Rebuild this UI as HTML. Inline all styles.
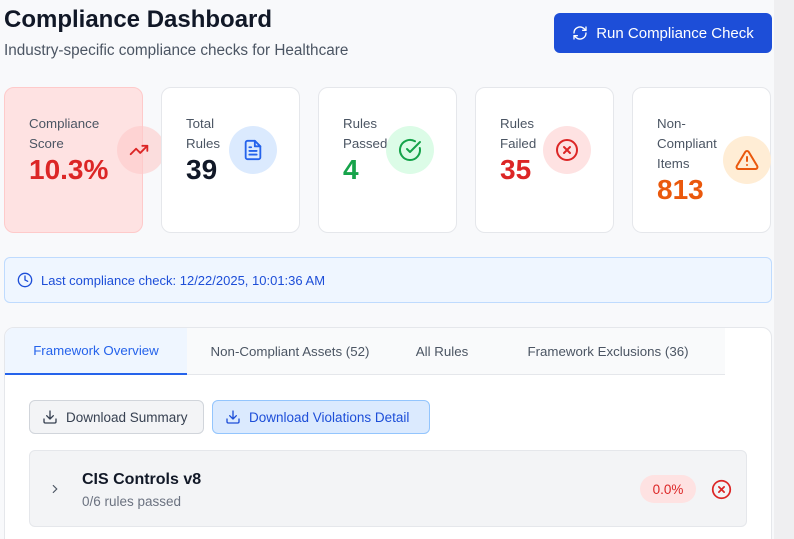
<!DOCTYPE html>
<html><head><style>
*{box-sizing:border-box;margin:0;padding:0}
html{overflow:hidden;width:794px;height:539px}
body{width:794px;height:539px;overflow:hidden;background:#f8f9fb;font-family:"Liberation Sans","DejaVu Sans",sans-serif;position:relative}
.strip{position:absolute;left:774px;top:0;width:20px;height:539px;background:#efeff1}
h1{position:absolute;left:4px;top:6px;font-size:24px;font-weight:bold;color:#111827}
.sub{position:absolute;left:4px;top:42px;font-size:15.3px;color:#4b5563}
.run{position:absolute;left:554px;top:13px;width:218px;height:40px;background:#1d4ed8;border-radius:6px;color:#fff;font-size:15px;display:flex;align-items:center;justify-content:center;gap:8px}
.card{position:absolute;top:87px;width:139px;height:146px;background:#fff;border:1px solid #e5e7eb;border-radius:10px}
.lab{position:absolute;left:24px;top:26px;font-size:13.3px;line-height:20px;color:#4b5563}
.val{position:absolute;left:24px;font-size:28px;font-weight:bold}
.ic{position:absolute;width:48px;height:48px;border-radius:50%;display:flex;align-items:center;justify-content:center}
.alert{position:absolute;left:4px;top:257px;width:768px;height:46px;background:#eff6ff;border:1px solid #bfdbfe;border-radius:6px;display:flex;align-items:center;padding-left:12px;gap:8px;color:#1d4ed8;font-size:13px}
.panel{position:absolute;left:4px;top:327px;width:768px;height:230px;background:#fff;border:1px solid #e5e7eb;border-radius:10px;overflow:hidden}
.tabs{height:47px;background:#f9fafb;border-bottom:1px solid #e5e7eb;display:flex;font-size:13.3px;color:#4b5563;width:720px}
.tab{display:flex;align-items:center;justify-content:center;height:47px}
.btn{position:absolute;top:72px;height:34px;border-radius:6px;display:flex;align-items:center;gap:8px;padding-left:12px;font-size:13.5px}
.fw{position:absolute;left:24px;top:122px;width:718px;height:77px;background:#f3f4f6;border:1px solid #e5e7eb;border-radius:6px}
</style></head><body>
<div class="strip"></div>
<h1>Compliance Dashboard</h1>
<div class="sub">Industry-specific compliance checks for Healthcare</div>
<div class="run"><svg width="16" height="16" viewBox="0 0 24 24" fill="none" stroke="#fff" stroke-width="2" stroke-linecap="round" stroke-linejoin="round"><path d="M3 12a9 9 0 0 1 15-6.7L21 8"/><path d="M21 3v5h-5"/><path d="M21 12a9 9 0 0 1-15 6.7L3 16"/><path d="M8 16H3v5"/></svg>Run Compliance Check</div>

<div class="card" style="left:4px;background:#fee2e2;border-color:#fecaca">
<div class="lab">Compliance<br>Score</div><div class="val" style="top:66px;color:#dc2626">10.3%</div>
<div class="ic" style="left:112px;top:38px;background:#fecaca;opacity:.6"></div>
<svg style="position:absolute;left:122px;top:52px" width="24" height="20" viewBox="0 0 24 24" fill="none" stroke="#dc2626" stroke-width="2.2" stroke-linecap="round" stroke-linejoin="round"><path d="M22 7l-8.5 8.5-5-5L2 17"/><path d="M16 7h6v6"/></svg>
</div>
<div class="card" style="left:161px">
<div class="lab">Total<br>Rules</div><div class="val" style="top:66px;color:#111827">39</div>
<div class="ic" style="left:67px;top:38px;background:#dbeafe"><svg width="22" height="22" viewBox="0 0 24 24" fill="none" stroke="#2563eb" stroke-width="2" stroke-linecap="round" stroke-linejoin="round"><path d="M14 2H6a2 2 0 0 0-2 2v16a2 2 0 0 0 2 2h12a2 2 0 0 0 2-2V8z"/><path d="M14 2v6h6M16 13H8M16 17H8M10 9H8"/></svg></div>
</div>
<div class="card" style="left:318px">
<div class="lab">Rules<br>Passed</div><div class="val" style="top:66px;color:#16a34a">4</div>
<div class="ic" style="left:67px;top:38px;background:#dcfce7"><svg width="24" height="24" viewBox="0 0 24 24" fill="none" stroke="#16a34a" stroke-width="2" stroke-linecap="round" stroke-linejoin="round"><path d="M21.8 10A10 10 0 1 1 17 3.3"/><path d="M9 11l3 3L22 4"/></svg></div>
</div>
<div class="card" style="left:475px">
<div class="lab">Rules<br>Failed</div><div class="val" style="top:66px;color:#dc2626">35</div>
<div class="ic" style="left:67px;top:38px;background:#fee2e2"><svg width="24" height="24" viewBox="0 0 24 24" fill="none" stroke="#dc2626" stroke-width="2" stroke-linecap="round"><circle cx="12" cy="12" r="10"/><path d="M15 9l-6 6M9 9l6 6"/></svg></div>
</div>
<div class="card" style="left:632px">
<div class="lab">Non-<br>Compliant<br>Items</div><div class="val" style="top:86px;color:#ea580c">813</div>
<div class="ic" style="left:90px;top:48px;background:#ffedd5"><svg width="24" height="24" viewBox="0 0 24 24" fill="none" stroke="#ea580c" stroke-width="2" stroke-linecap="round" stroke-linejoin="round"><path d="M10.3 3.9L1.8 18a2 2 0 0 0 1.7 3h17a2 2 0 0 0 1.7-3L13.7 3.9a2 2 0 0 0-3.4 0z"/><path d="M12 9v4M12 17h.01"/></svg></div>
</div>

<div class="alert"><svg width="16" height="16" viewBox="0 0 24 24" fill="none" stroke="#1d4ed8" stroke-width="2" stroke-linecap="round"><circle cx="12" cy="12" r="10"/><path d="M12 6v6l4 2"/></svg>Last compliance check: 12/22/2025, 10:01:36 AM</div>

<div class="panel">
<div class="tabs">
<div class="tab" style="width:182px;background:#eff6ff;color:#2563eb;border-bottom:2px solid #2563eb">Framework Overview</div>
<div class="tab" style="width:206px">Non-Compliant Assets (52)</div>
<div class="tab" style="width:98px">All Rules</div>
<div class="tab" style="width:234px">Framework Exclusions (36)</div>
</div>
<div class="btn" style="left:24px;width:175px;background:#f3f4f6;border:1px solid #d1d5db;color:#374151"><svg width="16" height="16" viewBox="0 0 24 24" fill="none" stroke="#374151" stroke-width="2" stroke-linecap="round" stroke-linejoin="round"><path d="M21 15v4a2 2 0 0 1-2 2H5a2 2 0 0 1-2-2v-4M7 10l5 5 5-5M12 15V3"/></svg>Download Summary</div>
<div class="btn" style="left:207px;width:218px;background:#dbeafe;border:1px solid #93c5fd;color:#1d4ed8"><svg width="16" height="16" viewBox="0 0 24 24" fill="none" stroke="#1d4ed8" stroke-width="2" stroke-linecap="round" stroke-linejoin="round"><path d="M21 15v4a2 2 0 0 1-2 2H5a2 2 0 0 1-2-2v-4M7 10l5 5 5-5M12 15V3"/></svg>Download Violations Detail</div>
<div class="fw">
<svg style="position:absolute;left:18px;top:30px" width="14" height="16" viewBox="0 0 24 24" fill="none" stroke="#4b5563" stroke-width="2" stroke-linecap="round"><path d="M9 6l6 6-6 6"/></svg>
<div style="position:absolute;left:52px;top:20px;font-size:16px;font-weight:bold;color:#111827">CIS Controls v8</div>
<div style="position:absolute;left:52px;top:43px;font-size:13.5px;color:#6b7280">0/6 rules passed</div>
<div style="position:absolute;left:610px;top:24px;width:56px;height:28px;border-radius:14px;background:#fee2e2;color:#dc2626;font-size:13.5px;display:flex;align-items:center;justify-content:center">0.0%</div>
<svg style="position:absolute;left:681px;top:28px" width="21" height="21" viewBox="0 0 24 24" fill="none" stroke="#dc2626" stroke-width="2" stroke-linecap="round"><circle cx="12" cy="12" r="10"/><path d="M15 9l-6 6M9 9l6 6"/></svg>
</div>
</div>
</body></html>
